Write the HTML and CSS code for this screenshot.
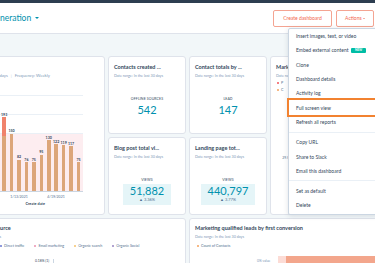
FILE: index.html
```html
<!DOCTYPE html>
<html lang="en">
<head>
    <meta charset="UTF-8">
    <meta name="viewport" content="width=device-width, initial-scale=1.0">
    <title>Lead generation dashboard</title>
    <link rel="stylesheet" href="styles.css">
</head>
<body>
    <div class="topbar"></div>

    <header class="header">
        <div class="dash-title">Lead generation <span class="caret"></span></div>
        <div class="header-actions">
            <button class="btn btn-create">Create dashboard</button>
            <button class="btn btn-actions">Actions <span class="caret caret-small"></span></button>
        </div>
    </header>

    <main class="dashboard">
        <!-- weekly contacts chart -->
        <section class="card card-chart">
            <div class="card-title">Contacts</div>
            <div class="card-date">Date range: In the last 30 days<span class="sep">|</span>Frequency: Weekly</div>
            <div class="plot">
                <div class="slot"><span class="bar-val">193</span><span class="bar bar-split" style="height: 74px"></span></div>
                <div class="slot"><span class="bar-val">150</span><span class="bar" style="height: 57.5px"></span></div>
                <div class="slot"><span class="bar-val">82</span><span class="bar" style="height: 31.4px"></span></div>
                <div class="slot"><span class="bar-val">76</span><span class="bar" style="height: 29.1px"></span></div>
                <div class="slot"><span class="bar-val">75</span><span class="bar" style="height: 28.7px"></span></div>
                <div class="slot"><span class="bar-val">95</span><span class="bar" style="height: 36.4px"></span></div>
                <div class="slot"><span class="bar-val">130</span><span class="bar" style="height: 51px"></span></div>
                <div class="slot"><span class="bar-val">122</span><span class="bar" style="height: 47px"></span></div>
                <div class="slot"><span class="bar-val">119</span><span class="bar" style="height: 45.6px"></span></div>
                <div class="slot"><span class="bar-val">117</span><span class="bar" style="height: 44.8px"></span></div>
                <div class="slot"><span class="bar-val">75</span><span class="bar" style="height: 28.7px"></span></div>
            </div>
            <div class="x-labels">
                <span>1/13/2021</span>
                <span>4/19/2021</span>
            </div>
            <div class="x-title">Create date</div>
        </section>

        <section class="card">
            <div class="card-title">Contacts created ...</div>
            <div class="card-date">Date range: In the last 30 days</div>
            <div class="kpi">
                <div class="kpi-label">Offline sources</div>
                <div class="kpi-value">542</div>
            </div>
        </section>

        <section class="card">
            <div class="card-title">Contact totals by ...</div>
            <div class="card-date">Date range: In the last 30 days</div>
            <div class="kpi">
                <div class="kpi-label">Lead</div>
                <div class="kpi-value">147</div>
            </div>
        </section>

        <section class="card card-tall">
            <div class="card-title">Marketing ...</div>
            <div class="card-date">Date range</div>
            <div class="legend-col">
                <div class="legend-item"><span class="dot dot-red"></span>P</div>
                <div class="legend-item"><span class="dot dot-orange"></span>C</div>
            </div>
            <div class="mini-chart">
                <div class="mini-axis"><span>29.5</span></div>
                <div class="mini-bar"></div>
            </div>
        </section>

        <section class="card">
            <div class="card-title">Blog post total vi...</div>
            <div class="card-date">Date range: In the last 30 days</div>
            <div class="kpi">
                <div class="kpi-label">Views</div>
                <div class="kpi-box">
                    <div class="kpi-value">51,882</div>
                    <div class="kpi-change">&#9650; 3.36%</div>
                </div>
            </div>
        </section>

        <section class="card">
            <div class="card-title">Landing page tot...</div>
            <div class="card-date">Date range: In the last 30 days</div>
            <div class="kpi">
                <div class="kpi-label">Views</div>
                <div class="kpi-box">
                    <div class="kpi-value">440,797</div>
                    <div class="kpi-change">&#9650; 3.77%</div>
                </div>
            </div>
        </section>

        <section class="card card-wide">
            <div class="card-title">Total contacts by source</div>
            <div class="card-date">Date range: In the last 30 days</div>
            <div class="legend-row legend-indent">
                <div class="legend-item"><span class="dot dot-blue"></span>Direct traffic</div>
                <div class="legend-item"><span class="dot dot-pink"></span>Email marketing</div>
                <div class="legend-item"><span class="dot dot-yellow"></span>Organic search</div>
                <div class="legend-item"><span class="dot dot-purple"></span>Organic Social</div>
            </div>
            <div class="pie-label"><span>0.18% (1)</span><span class="tick"></span></div>
        </section>

        <section class="card card-wide">
            <div class="card-title">Marketing qualified leads by first conversion</div>
            <div class="card-date">Date range: In the last 30 days</div>
            <div class="legend-row">
                <div class="legend-item"><span class="dot dot-orange"></span>Count of Contacts</div>
            </div>
            <div class="funnel-row">
                <span class="funnel-label">0% value</span>
                <span class="funnel-bar"></span>
            </div>
        </section>
    </main>

    <div class="menu">
        <div class="menu-group">
            <div class="menu-item">Insert images, text, or video</div>
            <div class="menu-item">Embed external content <span class="badge">NEW</span></div>
            <div class="menu-item">Clone</div>
            <div class="menu-item">Dashboard details</div>
            <div class="menu-item">Activity log</div>
            <div class="menu-item is-marked">Full screen view</div>
            <div class="menu-item">Refresh all reports</div>
        </div>
        <div class="menu-group">
            <div class="menu-item">Copy URL</div>
            <div class="menu-item">Share to Slack</div>
            <div class="menu-item">Email this dashboard</div>
        </div>
        <div class="menu-group">
            <div class="menu-item">Set as default</div>
            <div class="menu-item">Delete</div>
        </div>
    </div>
</body>
</html>
```

FILE: styles.css
```css
body {
    margin: 0;
    width: 375px;
    height: 263px;
    overflow: hidden;
    position: relative;
    background-color: #f2f7f9;
    font-family: 'Lato', 'Liberation Sans', sans-serif;
    color: #33475b;
}

.topbar {
    height: 3px;
    background-color: #2d3e50;
}

.header {
    height: 30px;
    background-color: #fff;
    border-bottom: 1px solid #dfe3eb;
    display: flex;
    align-items: center;
    justify-content: space-between;
    padding-right: 1px;
}

.dash-title {
    margin-left: -28.6px;
    font-size: 8.5px;
    color: #0091ae;
    white-space: nowrap;
    display: flex;
    align-items: center;
    gap: 4px;
}

.caret {
    display: inline-block;
    width: 0;
    height: 0;
    border-left: 2.2px solid transparent;
    border-right: 2.2px solid transparent;
    border-top: 2.5px solid #0091ae;
}

.caret-small {
    border-left-width: 1.4px;
    border-right-width: 1.4px;
    border-top: 1.6px solid #f2664c;
    vertical-align: middle;
}

.header-actions {
    display: flex;
    gap: 4px;
}

.btn {
    height: 17px;
    padding: 0;
    font: inherit;
    font-size: 5px;
    color: #f2664c;
    background-color: #fff;
    border: 1px solid #f4a492;
    border-radius: 2px;
}

.btn-create {
    width: 59px;
}

.btn-actions {
    width: 38px;
}

/* dashboard grid, the page is scrolled a bit to the right */
.dashboard {
    display: grid;
    grid-template-columns: repeat(6, 78px);
    grid-auto-rows: 78px;
    gap: 3px;
    margin-left: -54px;
    padding-top: 22px;
}

.card {
    background-color: #fff;
    border: 1px solid #dfe3eb;
    border-radius: 3px;
    padding: 6px 5px;
    box-sizing: border-box;
    overflow: hidden;
    min-width: 0;
}

.card-chart {
    grid-column: 1 / span 2;
    grid-row: 1 / span 2;
}

.card-tall {
    grid-column: 5 / span 2;
    grid-row: 1 / span 2;
}

.card-wide {
    grid-column: span 3;
    padding-top: 5px;
}

.card-title {
    font-size: 5.5px;
    line-height: 8px;
    font-weight: 700;
    white-space: nowrap;
}

.card-date {
    margin-top: 2px;
    font-size: 3.7px;
    line-height: 5px;
    color: #7c98b6;
    white-space: nowrap;
}

.card-chart .card-date {
    font-size: 4.2px;
}

.sep {
    margin: 0 3px;
    color: #cbd6e2;
}

/* bar chart */
.plot {
    height: 96px;
    margin: 17px 16px 0 0;
    padding-right: 0.8px;
    display: flex;
    align-items: flex-end;
    justify-content: flex-end;
    border-bottom: 1px solid #cbd6e2;
    background:
        repeating-linear-gradient(to bottom, #eaf0f6 0 0.6px, transparent 0.6px 19.2px),
        linear-gradient(to bottom, transparent 39.6%, #fdedf0 39.6%);
}

.slot {
    width: 7.45px;
    display: flex;
    flex-direction: column;
    align-items: center;
}

.bar-val {
    font-size: 3.6px;
    line-height: 4px;
    font-weight: 700;
    margin-bottom: 0.4px;
}

.bar {
    width: 3.6px;
    background-color: #dca67a;
}

.bar-split {
    background: linear-gradient(to bottom, #f0836c 0 25%, #dca67a 25%);
}

.x-labels {
    display: flex;
    justify-content: flex-end;
    gap: 17px;
    margin: 2.5px 16px 0 0;
    padding-right: 17px;
    font-size: 3.5px;
    line-height: 5px;
    color: #516f90;
}

.x-labels span {
    width: 20px;
    text-align: center;
}

.x-title {
    margin: 1px 16px 0 0;
    padding-right: 38px;
    display: flex;
    justify-content: flex-end;
    font-size: 3.8px;
    line-height: 5px;
    font-weight: 700;
}

/* single value reports */
.kpi {
    margin-top: 18.5px;
    display: flex;
    flex-direction: column;
    align-items: center;
}

.kpi-label {
    font-size: 3.5px;
    line-height: 5px;
    text-transform: uppercase;
    letter-spacing: 0.1px;
}

.kpi-value {
    margin-top: 2.5px;
    font-size: 11px;
    line-height: 12px;
    color: #0091ae;
}

.kpi-box {
    margin-top: 1.5px;
    padding: 1px 7px 2px;
    background-color: #e5f5f8;
    display: flex;
    flex-direction: column;
    align-items: center;
}

.kpi-box .kpi-value {
    margin-top: 0;
}

.kpi-change {
    font-size: 4px;
    line-height: 6px;
    color: #516f90;
}

/* legends */
.legend-col {
    margin-top: 1px;
    margin-left: 1px;
}

.legend-row {
    display: flex;
    gap: 10px;
    margin-top: 3px;
    margin-left: 2px;
}

.legend-indent {
    margin-left: 48px;
}

.legend-item {
    font-size: 3.7px;
    line-height: 7px;
    color: #516f90;
    white-space: nowrap;
    display: flex;
    align-items: center;
    gap: 2px;
}

.dot {
    width: 2px;
    height: 2px;
    border-radius: 50%;
}

.dot-red { background-color: #f2545b; }
.dot-orange { background-color: #f5a25d; }
.dot-blue { background-color: #6a78d1; }
.dot-pink { background-color: #ea90b1; }
.dot-yellow { background-color: #f5c26b; }
.dot-purple { background-color: #9784c2; }

.mini-chart {
    display: flex;
    margin-top: 5px;
}

.mini-axis {
    width: 13px;
    padding-top: 58px;
    text-align: right;
    font-size: 3.4px;
    color: #516f90;
}

.mini-bar {
    width: 30px;
    height: 33px;
    background-color: #f5a25d;
}

.pie-label {
    margin: 9.5px 0 0 83px;
    display: flex;
    align-items: center;
    gap: 4px;
    font-size: 3.4px;
    line-height: 5px;
}

.tick {
    width: 0.6px;
    height: 4px;
    background-color: #cbd6e2;
}

.funnel-row {
    margin-top: 7px;
    display: flex;
    align-items: flex-end;
    gap: 8px;
    padding-left: 62px;
}

.funnel-label {
    font-size: 3.4px;
    line-height: 5px;
    color: #7c98b6;
}

.funnel-bar {
    width: 100px;
    height: 8px;
    background: linear-gradient(to right, #fcdcd6 0 8px, #f3a68c 8px);
}

/* actions dropdown */
.menu {
    position: absolute;
    left: 288px;
    top: 28px;
    width: 89px;
    background-color: #fff;
    border: 1px solid #cbd6e2;
    border-radius: 2px;
    box-shadow: 0 1px 5px rgba(45, 62, 80, 0.15);
}

.menu-group {
    padding: 2.5px 0;
}

.menu-group:first-child {
    padding-top: 0;
}

.menu-group:last-child {
    padding-bottom: 1.5px;
}

.menu-group + .menu-group {
    border-top: 1px solid #eaf0f6;
}

.menu-item {
    height: 14.3px;
    padding-left: 7px;
    display: flex;
    align-items: center;
    font-size: 5px;
    white-space: nowrap;
}

.menu-item.is-marked {
    margin-right: 3px;
    outline: 2px solid #f28230;
}

.badge {
    margin-left: 3px;
    padding: 0 3.5px;
    font-size: 3px;
    line-height: 5px;
    font-weight: 700;
    color: #fff;
    background-color: #00bda5;
    border-radius: 1px;
}
```
